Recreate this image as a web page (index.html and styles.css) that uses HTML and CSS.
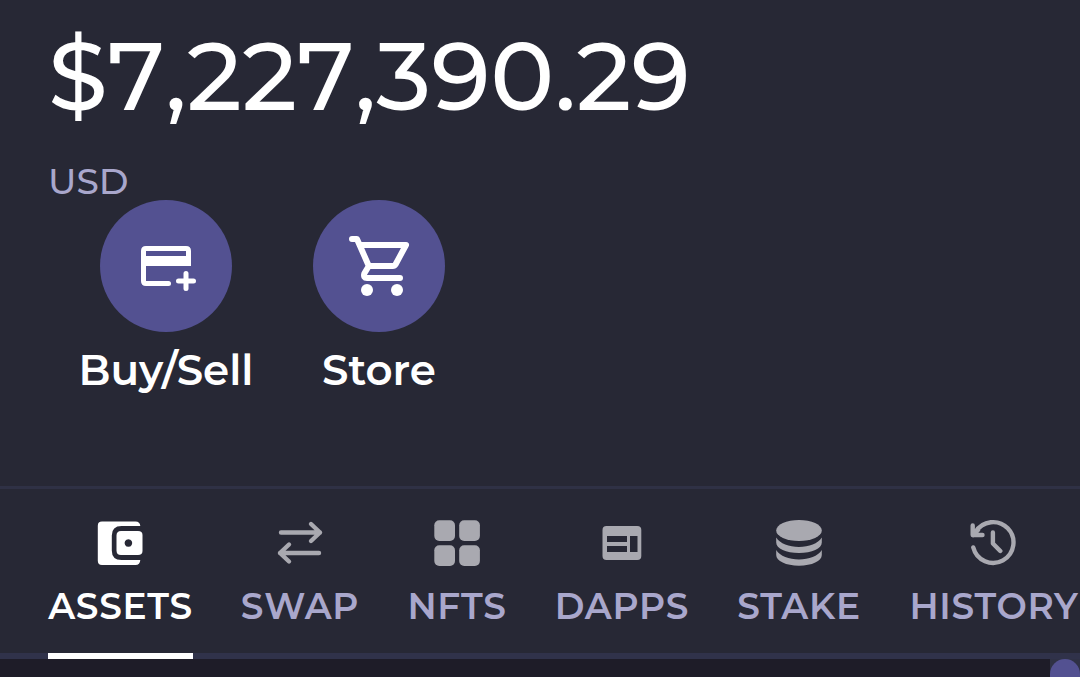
FILE: index.html
```html
<!DOCTYPE html>
<html lang="en">
<head>
    <meta charset="UTF-8">
    <title>Wallet</title>
    <link rel="stylesheet" href="styles.css">
</head>
<body>
<div class="wallet">
    <div class="summary">
        <div class="amount">$7,227,390.29</div>
        <div class="currency">USD</div>
        <div class="actions">
            <div class="action buy">
                <div class="circle">
                    <svg width="60" height="60" viewBox="0 0 24 24">
                        <path d="M21 12V6Q21 5 20 5H4Q3 5 3 6V18Q3 19 4 19H13" fill="none" stroke="#fff" stroke-width="2"/>
                        <circle cx="13" cy="19" r="1" fill="#fff"/>
                        <path d="M3 8h18v4H3z" fill="#fff"/>
                        <path d="M20 15v6M17 18h6" stroke="#fff" stroke-width="2" stroke-linecap="round"/>
                    </svg>
                </div>
                <div class="name">Buy/Sell</div>
            </div>
            <div class="action store">
                <div class="circle">
                    <svg width="72" height="72" viewBox="-1 0 24 24">
                        <path d="M2 3H3.65L7.6 12H15.6Q16.2 12 16.5 11.5L20 5H4.6M7.6 12L6.1 14.5Q5.7 16 7 16H18" fill="none" stroke="#fff" stroke-width="2" stroke-linecap="round" stroke-linejoin="round"/>
                        <circle cx="7" cy="20" r="2" fill="#fff"/>
                        <circle cx="17" cy="20" r="2" fill="#fff"/>
                    </svg>
                </div>
                <div class="name">Store</div>
            </div>
        </div>
    </div>

    <div class="tabs">
        <div class="tab assets active">
            <svg width="48" height="48" viewBox="0 0 48 48">
                <path d="M5 2.5H38.5Q43 2.5 43.3 7H24.5Q14.8 7 14.8 16.5V31.5Q14.8 41 24.5 41H43.3Q43 46 38.5 46H5Q.8 46 .8 41.8V6.7Q.8 2.5 5 2.5Z"/>
                <path fill-rule="evenodd" d="M24 12H41Q45.5 12 45.5 16V32Q45.5 36 41 36H24Q19.5 36 19.5 31.5V16.5Q19.5 12 24 12ZM31.4 20.2a3.8 3.8 0 1 0 .01 0Z"/>
            </svg>
            <span>ASSETS</span>
        </div>
        <div class="tab swap">
            <svg class="line" width="48" height="48" viewBox="0 0 48 48">
                <path d="M5 13.5H44M35 5L44 13.5L35 22M43 34H4M13 25.5L4 34L13 42.5"/>
            </svg>
            <span>SWAP</span>
        </div>
        <div class="tab nfts">
            <svg width="48" height="48" viewBox="0 0 48 48">
                <rect x="1.3" y="1.3" width="20.7" height="20.7" rx="5"/>
                <rect x="26.2" y="1.3" width="20.7" height="20.7" rx="5"/>
                <rect x="1.3" y="26.2" width="20.7" height="20.7" rx="5"/>
                <rect x="26.2" y="26.2" width="20.7" height="20.7" rx="5"/>
            </svg>
            <span>NFTS</span>
        </div>
        <div class="tab dapps">
            <svg width="48" height="48" viewBox="0 0 48 48">
                <path fill-rule="evenodd" d="M8.5 7H39.3Q43.3 7 43.3 11V37Q43.3 41 39.3 41H8.5Q4.5 41 4.5 37V11Q4.5 7 8.5 7ZM9 17V23H29V17ZM9 27V33H29V27ZM32 17V33H39.5V17Z"/>
            </svg>
            <span>DAPPS</span>
        </div>
        <div class="tab stake">
            <svg width="48" height="48" viewBox="0 0 48 48">
                <ellipse cx="24" cy="11.5" rx="22.8" ry="10.5"/>
                <path d="M1.2 18.5C5 24.5 14 28 24 28S43 24.5 46.8 18.5V23.5C46.8 29.5 37 34 24 34S1.2 29.5 1.2 23.5Z"/>
                <path d="M1.2 31C5 37 14 40.5 24 40.5S43 37 46.8 31V36C46.8 42 37 46.7 24 46.7S1.2 42 1.2 36Z"/>
            </svg>
            <span>STAKE</span>
        </div>
        <div class="tab history">
            <svg class="line" width="48" height="48" viewBox="0 0 48 48">
                <path d="M3.3 28.5A20.4 20.4 0 1 0 5.6 13L3.2 16.3M2.7 6.5V16H12.5M4 15L8 11M22.9 13.5V24.5L30.3 32"/>
            </svg>
            <span>HISTORY</span>
        </div>
    </div>

    <div class="content">
        <div class="scrollbar"><div class="thumb"></div></div>
    </div>
</div>
</body>
</html>
```

FILE: styles.css
```css
*{
    box-sizing: border-box;
    margin: 0;
    padding: 0;
}
body{
    background: #272835;
    color: #fff;
    font-family: Montserrat, Inter, sans-serif;
    overflow: hidden;
}
.wallet{
    display: flex;
    flex-direction: column;
    height: 677px;
    overflow: hidden;
}
.summary{
    flex: none;
    height: 489px;
    padding: 21px 48px 0;
    border-bottom: 3px solid #2f3145;
}
.amount{
    height: 110px;
    font-size: 96px;
    font-weight: 500;
    line-height: 110px;
    font-kerning: none;
}
.currency{
    height: 44px;
    margin-top: 25px;
    font-size: 36px;
    font-weight: 500;
    line-height: 51px;
    color: #a9a7cc;
}
.actions{
    display: flex;
    gap: 61px;
    padding-left: 32px;
}
.action{
    display: flex;
    flex-direction: column;
    align-items: center;
}
.buy{
    width: 172px;
}
.store{
    width: 132px;
}
.circle{
    display: flex;
    align-items: center;
    justify-content: center;
    width: 132px;
    height: 132px;
    border-radius: 50%;
    background: #535191;
}
.name{
    margin-top: 12px;
    font-size: 42px;
    font-weight: 600;
    line-height: 52px;
}
.tabs{
    display: flex;
    flex: none;
    gap: 48px;
    height: 170px;
    padding: 30px 0 0 48px;
    border-bottom: 6px solid #30324a;
}
.tab{
    display: flex;
    flex: none;
    flex-direction: column;
    align-items: center;
    height: 140px;
    color: #a9a7cc;
    font-size: 36px;
    font-weight: 600;
    line-height: 44px;
    letter-spacing: .7px;
    white-space: nowrap;
}
.tab svg{
    flex: none;
    margin-bottom: 17px;
    fill: #a9a9b0;
}
.tab .line{
    fill: none;
    stroke: #a9a9b0;
    stroke-width: 4.4;
    stroke-linecap: round;
    stroke-linejoin: round;
}
.active{
    border-bottom: 6px solid #fff;
    color: #fff;
}
.tab.active svg{
    fill: #fff;
}
.assets{ width: 145px; }
.swap{ width: 118px; }
.nfts{ width: 100px; }
.dapps{ width: 134px; }
.stake{ width: 124px; }
.history{ width: 170px; }
.content{
    display: flex;
    flex: 1;
    justify-content: flex-end;
    background: #1e1c28;
}
.scrollbar{
    width: 30px;
    height: 18px;
    background: #2f3145;
    overflow: hidden;
}
.thumb{
    height: 90px;
    border-radius: 15px;
    background: #535191;
}
```
